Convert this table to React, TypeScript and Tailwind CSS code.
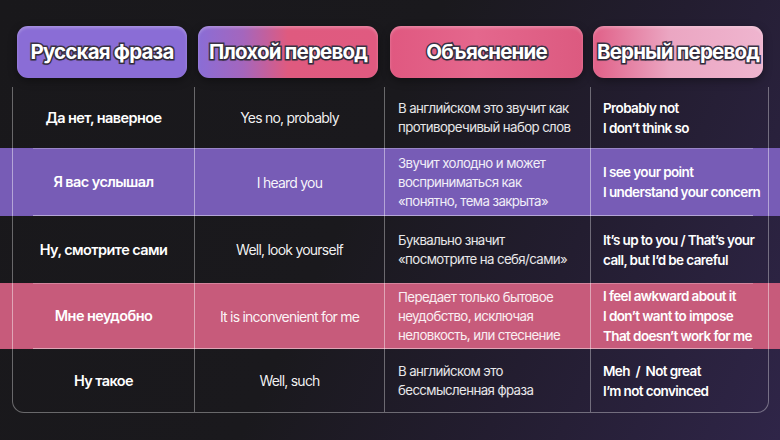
import React from "react";

type Row = {
  ru: string;
  bad: string;
  why: string[];
  good: string[];
  band?: "purple" | "pink";
  h: string;
};

const rows: Row[] = [
  {
    ru: "Да нет, наверное",
    bad: "Yes no, probably",
    why: ["В английском это звучит как", "противоречивый набор слов"],
    good: ["Probably not", "I don’t think so"],
    h: "h-[61px]",
  },
  {
    ru: "Я вас услышал",
    bad: "I heard you",
    why: ["Звучит холодно и может", "восприниматься как", "«понятно, тема закрыта»"],
    good: ["I see your point", "I understand your concern"],
    band: "purple",
    h: "h-[68px]",
  },
  {
    ru: "Ну, смотрите сами",
    bad: "Well, look yourself",
    why: ["Буквально значит", "«посмотрите на себя/сами»"],
    good: ["It’s up to you / That’s your", "call, but I’d be careful"],
    h: "h-[67px]",
  },
  {
    ru: "Мне неудобно",
    bad: "It is inconvenient for me",
    why: ["Передает только бытовое", "неудобство, исключая", "неловкость, или стеснение"],
    good: ["I feel awkward about it", "I don’t want to impose", "That doesn’t work for me"],
    band: "pink",
    h: "h-[66px]",
  },
  {
    ru: "Ну такое",
    bad: "Well, such",
    why: ["В английском это", "бессмысленная фраза"],
    good: ["Meh  /  Not great", "I’m not convinced"],
    h: "h-[64px]",
  },
];

const outline =
  "[-webkit-text-stroke:3px_#3b3346] [paint-order:stroke_fill] [text-shadow:0_1px_2px_rgba(0,0,0,0.35)]";

function Pill({ label, className }: { label: string; className: string }) {
  return (
    <div
      className={`h-[52px] rounded-[11px] flex items-center justify-center shadow-[inset_0_2px_3px_rgba(255,255,255,0.25),0_3px_8px_rgba(0,0,0,0.35)] ${className}`}
    >
      <span className={`text-[20.5px] font-bold tracking-[-0.04em] text-white ${outline}`}>
        {label}
      </span>
    </div>
  );
}

export default function App() {
  return (
    <div
      className="w-[780px] h-[440px] overflow-hidden bg-[linear-gradient(115deg,#19181b_0%,#1a191d_45%,#231d30_70%,#2f2548_100%)] text-white"
      style={{ fontFamily: "Inter, 'Noto Sans', sans-serif" }}
    >
      {/* headers */}
      <div className="pt-[26px] pl-[17px] flex">
        <Pill label="Русская фраза" className="w-[170px] bg-[#8a6dd6]" />
        <Pill
          label="Плохой перевод"
          className="ml-[11px] w-[180px] bg-[linear-gradient(90deg,#8a6dd6_0%,#a466bd_25%,#df5a7f_50%,#e05a80_100%)]"
        />
        <Pill
          label="Объяснение"
          className="ml-[12px] w-[193px] bg-[linear-gradient(90deg,#e05880_0%,#e4678d_45%,#dc5a80_100%)]"
        />
        <Pill
          label="Верный перевод"
          className="ml-[10px] w-[170px] bg-[linear-gradient(90deg,#e06088_0%,#eba6c2_45%,#efb5cf_100%)]"
        />
      </div>

      {/* table */}
      <div className="mt-[9px]">
        {rows.map((r, i) => {
          const last = i === rows.length - 1;
          const bg =
            r.band === "purple"
              ? "bg-[#775cb6]"
              : r.band === "pink"
              ? "bg-[#c75b7b]"
              : "";
          const line = r.band ? "border-white/45" : "border-white/35";
          return (
            <div key={i} className={`relative ${bg}`}>
              {r.band && (
                <>
                  <div className="absolute top-0 left-[33px] right-[27px] h-px bg-white/25" />
                  <div className="absolute bottom-0 left-[33px] right-[27px] h-px bg-white/45" />
                </>
              )}
              <div
                className={`mx-[12px] mr-[11px] grid grid-cols-[181px_190px_206px_1fr] ${r.h} border-x ${line} ${
                  last ? "border-b rounded-b-[12px]" : ""
                }`}
              >
                <div className="flex items-center justify-center text-[14.5px] font-semibold tracking-[-0.04em]">
                  {r.ru}
                </div>
                <div className={`border-l ${line} flex items-center justify-center text-[14px] tracking-[-0.055em] text-white/95`}>
                  {r.bad}
                </div>
                <div className={`border-l ${line} flex flex-col justify-center pl-[13px] text-[13.25px] leading-[19px] tracking-[-0.045em] text-white/90`}>
                  {r.why.map((t) => (
                    <div key={t}>{t}</div>
                  ))}
                </div>
                <div className={`border-l ${line} flex flex-col justify-center pl-[12px] text-[13.5px] leading-[20px] font-semibold tracking-[-0.045em] whitespace-pre`}>
                  {r.good.map((t) => (
                    <div key={t}>{t}</div>
                  ))}
                </div>
              </div>
            </div>
          );
        })}
      </div>
    </div>
  );
}
